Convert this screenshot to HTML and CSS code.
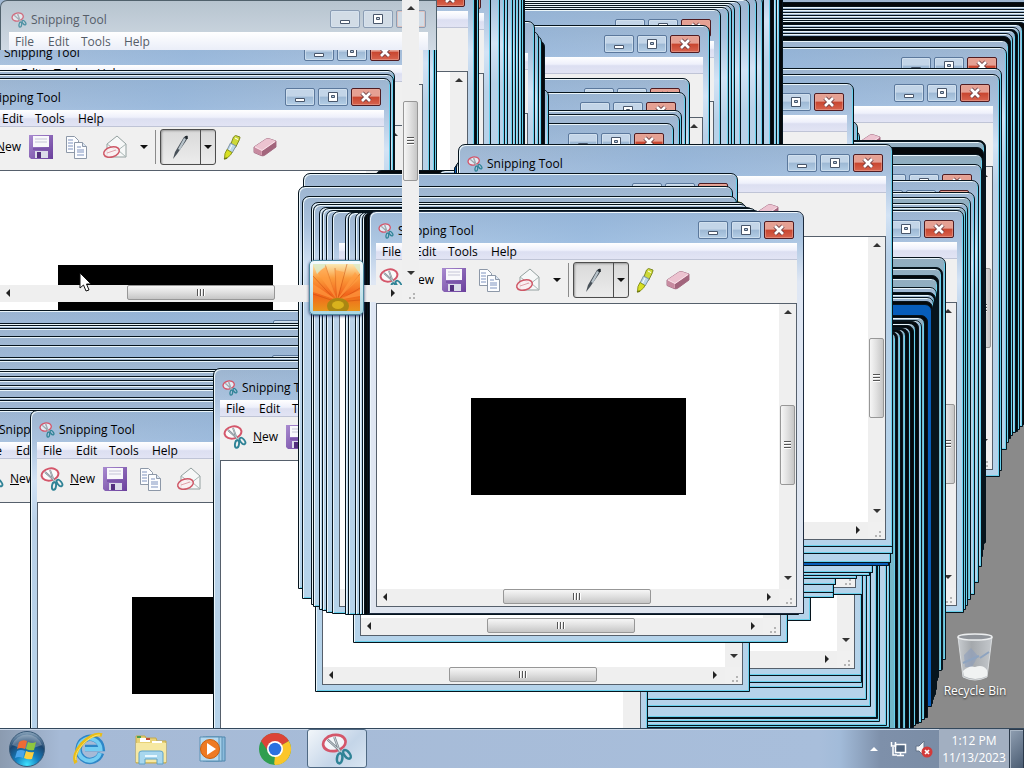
FILE: index.html
```html
<!DOCTYPE html>
<html lang="en">
<head>
<meta charset="utf-8">
<title>Desktop</title>
<link rel="stylesheet" href="styles.css">
</head>
<body>
<svg class="sprite" aria-hidden="true">
  <defs>
    <linearGradient id="g-pink" x1="0" y1="0" x2="1" y2="1"><stop offset="0" stop-color="#f3cfda"/><stop offset="1" stop-color="#b76f88"/></linearGradient>
    <linearGradient id="g-purple" x1="0" y1="0" x2="1" y2="1"><stop offset="0" stop-color="#a98bd0"/><stop offset="1" stop-color="#6a3f9c"/></linearGradient>
    <radialGradient id="g-orb" cx="50%" cy="95%" r="95%"><stop offset="0" stop-color="#3fe3ff"/><stop offset=".35" stop-color="#1580c0"/><stop offset=".7" stop-color="#1c456f"/><stop offset="1" stop-color="#8fa9bf"/></radialGradient>
    <linearGradient id="g-sky" x1="0" y1="0" x2="0" y2="1"><stop offset="0" stop-color="#fbe9b4"/><stop offset=".3" stop-color="#fb9c3c"/><stop offset=".65" stop-color="#f2641b"/><stop offset="1" stop-color="#e8961c"/></linearGradient>
    <linearGradient id="g-bin" x1="0" y1="0" x2="1" y2="0"><stop offset="0" stop-color="#c8ccd0"/><stop offset=".4" stop-color="#a4a8ac"/><stop offset="1" stop-color="#c4c8cc"/></linearGradient>
  </defs>
  <symbol id="snip" viewBox="0 0 24 24">
    <ellipse cx="10" cy="7.500" rx="8.500" ry="6" fill="#fff" fill-opacity=".7" stroke="#d4566a" stroke-width="2" transform="rotate(-12 10 7.500)"/>
    <path d="M5 5l10 9M10 3l4 11" stroke="#7b8790" stroke-width="1.800" fill="none"/>
    <path d="M5 5l10 9M10 3l4 11" stroke="#dfe5e8" stroke-width=".6" fill="none"/>
    <ellipse cx="14" cy="19" rx="2" ry="3.800" fill="none" stroke="#2f8396" stroke-width="1.900" transform="rotate(8 14 19)"/>
    <ellipse cx="19.500" cy="16" rx="2" ry="3.800" fill="none" stroke="#2f8396" stroke-width="1.900" transform="rotate(-38 19.500 16)"/>
  </symbol>
  <symbol id="save" viewBox="0 0 24 24">
    <path d="M0 0h24v24H2l-2-2z" fill="url(#g-purple)"/><path d="M4 1h16v11H4z" fill="#f8f8fb"/><path d="M6 4h12M6 7h12" stroke="#c4c4d6"/>
    <path d="M4 13h16v2H4z" fill="#7b55aa"/><path d="M6 16h13v7H6z" fill="#dcdcea"/><path d="M8 17h4v6H8z" fill="#54307f"/>
  </symbol>
  <symbol id="copy" viewBox="0 0 24 24">
    <g fill="#fcfdff" stroke="#8d98a8"><path d="M2.500 1.500h8l4 4v12h-12z"/><path d="M10.500 7.500h8l4 4v12h-12z"/></g>
    <path d="M4 5h5M4 8h5M4 11h5M4 14h5M13 12h4M13 15h7M13 17h7M13 20h7" stroke="#7e93bf"/>
    <path d="M18.500 7.500v4h4" fill="#dbe5f2" stroke="#8d98a8"/>
  </symbol>
  <symbol id="mail" viewBox="0 0 26 26">
    <path d="M5 10L15 2l9 8v13H5z" fill="#f6f8f8" stroke="#93a09f"/><path d="M5 10l10 7 9-7M24 23l-8-7" fill="none" stroke="#a9b6b4"/>
    <ellipse cx="9.500" cy="18" rx="8" ry="5" fill="#fbeef0" fill-opacity=".8" stroke="#cf5867" stroke-width="1.500" transform="rotate(-16 9.500 18)"/>
    <path d="M5 19l9-3" stroke="#e0a0a8"/>
  </symbol>
  <symbol id="pen" viewBox="0 0 20 26">
    <path d="M2 25l2-7L13 3q3-2 4-1 0 2-2 5L6 20z" fill="#49525a"/><path d="M7 15l6-11 2 1-6 11z" fill="#b8c3ca"/><path d="M15 2l1 3" stroke="#20262b" stroke-width="2"/>
  </symbol>
  <symbol id="marker" viewBox="0 0 20 26">
    <path d="M11.500 3l2-1.500 4.500 1.500-.5 2.500-4 8-5-2.500z" fill="#cdd93a" stroke="#7f8a24"/>
    <path d="M8.500 9l5.500 3-4 7-5-3z" fill="#bcd7ea" stroke="#7d93a2"/>
    <path d="M5 15.500l5 3-1.500 2.500-4 3.500H2.500l.5-5z" fill="#d9e022" stroke="#8c961c"/>
    <path d="M13 4l3 1.500M10 11l-2.500 5" stroke="#fff"/><path d="M2 25l3-1" stroke="#6f7a12" stroke-width="1.500"/>
  </symbol>
  <symbol id="eraser" viewBox="0 0 24 22">
    <path d="M1 11L13 3q2-1 4 0l6 2v6L12 19q-2 1.500-4 .5l-7-3z" fill="#d79db0" stroke="#a7748a"/>
    <path d="M1 11L13 3q2-1 4 0l6 2-13 9q-1 .6-2 0z" fill="#ecc3d0"/>
    <path d="M1 11l7 3.500v5L1 16z" fill="#c78ba0"/><path d="M9 15L23 5.500V11L12 19l-3 .7z" fill="#a2657c"/><path d="M2 11l7 3.500L22 5.500" fill="none" stroke="#f9e3ea"/>
  </symbol>
  <symbol id="min" viewBox="0 0 12 12"><path d="M1.500 7.500h9v3h-9z" fill="#fff" stroke="#48566b"/></symbol>
  <symbol id="max" viewBox="0 0 12 12"><path d="M1.500 1.500h9v9h-9zM4.500 4.500h3v2h-3z" fill="#fff" fill-rule="evenodd" stroke="#48566b"/></symbol>
  <symbol id="close" viewBox="0 0 12 12"><path d="M2 2l8 8M10 2l-8 8" stroke="#6b3b40" stroke-width="4.500"/><path d="M2 2l8 8M10 2l-8 8" stroke="#fff" stroke-width="2.700"/></symbol>
</svg>

<div class="screen">
  <main class="desktop" id="desktop">
    <a class="recycle" href="#recycle">
      <svg width="40" height="50" viewBox="0 0 40 50"><path d="M3 4l5 40q12 6 24 0l5-40z" fill="url(#g-bin)" stroke="#d9dcde"/><ellipse cx="20" cy="4" rx="17" ry="3" fill="#90949a" stroke="#eceeef" stroke-width="1.500"/><path d="M9 22l7-7 7 8-6 11H10z" fill="#8a9dbd" opacity=".55"/><path d="M25 25l9-6M8 30l16-7" stroke="#8ea4c0" stroke-width="2"/><path d="M8 38q6-6 12-4 8-3 12 3v6q-12 6-23 0z" fill="#f0f2f2"/></svg>
      <span>Recycle Bin</span>
    </a>
  </main>

  <footer class="taskbar">
    <button class="start" aria-label="Start"><svg width="38" height="38" viewBox="0 0 38 38"><circle cx="19" cy="19" r="17.500" fill="url(#g-orb)" stroke="#395a78"/><path d="M4 15a16 16 0 0 1 30 0q-15 7-30 0z" fill="#fff" opacity=".25"/><path d="M11 12q4-3 8-1l-2 8q-4-2-8 0z" fill="#ee6b35"/><path d="M20 12q4 2 8 0l-2 8q-4 1-8-1z" fill="#8ec63f"/><path d="M9 21q4-2 8 0l-2 7q-4-2-8 0z" fill="#4aa5ea"/><path d="M18 21q4 2 8 1l-2 7q-4 1-8-1z" fill="#fccf3e"/></svg></button>
    <nav class="apps">
      <button class="app" aria-label="Internet Explorer"><svg width="34" height="34" viewBox="0 0 34 34"><path d="M29 21a11.500 11.500 0 1 1 .5-5H13" fill="none" stroke="#2e87c8" stroke-width="6.500"/><path d="M28 21a11 11 0 1 1 .5-4H13" fill="none" stroke="#74cdf2" stroke-width="4"/><path d="M4 31C-2 21 17-1 30 3" fill="none" stroke="#e9bd18" stroke-width="3.500"/><path d="M4 28C1 20 18 2 28 3" fill="none" stroke="#f9e67a"/></svg></button>
      <button class="app" aria-label="Windows Explorer"><svg width="34" height="32" viewBox="0 0 34 32"><path d="M2 3h9l1 2h10l1 3h9v22H2z" fill="#e8d276" stroke="#c5aa4d"/><path d="M6 5h10v4H6zM18 8h10v4H18z" fill="#fff"/><path d="M3 3h4v2H3z" fill="#4b9e4d"/><path d="M12 5h4v2h-4z" fill="#c34b35"/><path d="M2 10h30v19H2z" fill="#f6e8a2"/><path d="M5 31V20q0-2 3-2h18q3 0 3 2v11h-6v-5H11v5z" fill="#a8d7ee" stroke="#5fa2c8"/><path d="M11 23h12" stroke="#e8f8ff" stroke-width="2"/></svg></button>
      <button class="app" aria-label="Windows Media Player"><svg width="30" height="28" viewBox="0 0 30 28"><path d="M8 2h19v24H8z" fill="#8bbbdc" stroke="#4f86ad"/><path d="M5 2h19v24H5z" fill="#a5cfe8" stroke="#5b90b4"/><path d="M2 2h19v24H2z" fill="#b6daf0" stroke="#5b90b4"/><circle cx="12" cy="14" r="9.500" fill="#ee7a23" stroke="#c9600f"/><path d="M9 8l9 6-9 6z" fill="#fff"/></svg></button>
      <button class="app" aria-label="Google Chrome"><svg width="34" height="34" viewBox="0 0 34 34"><circle cx="17" cy="17" r="16" fill="#2f9e4f"/><path d="M17 17L3.100 9A16 16 0 0 1 30.900 9z" fill="#dc4437"/><path d="M17 17l13.900-8A16 16 0 0 1 17 33z" fill="#fbc629"/><path d="M3.100 9h14l-6.500 11z" fill="#dc4437"/><path d="M23.500 20.500L16 33l1-9z" fill="#fbc629"/><circle cx="17" cy="17" r="8" fill="#fff"/><circle cx="17" cy="17" r="6.300" fill="#2a70e0"/></svg></button>
      <button class="app app-open" aria-label="Snipping Tool"><svg width="32" height="32"><use href="#snip"/></svg></button>
    </nav>
    <div class="tray">
      <button class="tray-icon" aria-label="Show hidden icons"><svg width="10" height="6"><path d="M1 5l4-4 4 4z" fill="#fff"/></svg></button>
      <button class="tray-icon" aria-label="Network"><svg width="18" height="16" viewBox="0 0 18 16"><path d="M5.500 3.500h10v8h-10z" fill="#50647e" stroke="#fff" stroke-width="1.500"/><path d="M7 14.500h7M10.500 12v2M3 6v8h4M1.500 1v4h4V1" fill="none" stroke="#fff" stroke-width="1.500"/></svg></button>
      <button class="tray-icon" aria-label="Volume muted"><svg width="18" height="18" viewBox="0 0 18 18"><path d="M1 6h3l5-5v15l-5-5H1z" fill="#f4f6f8" stroke="#64748a"/><circle cx="12" cy="12" r="5.500" fill="#d23a3a"/><path d="M10 10l4 4M14 10l-4 4" stroke="#fff" stroke-width="1.700"/></svg></button>
    </div>
    <button class="clock"><span>1:12 PM</span><span>11/13/2023</span></button>
    <button class="peek" aria-label="Show desktop"></button>
  </footer>
</div>
<script src="desktop.js"></script>
</body>
</html>
```
FILE: styles.css
```css
* { box-sizing: border-box; }
body { margin: 0; font: 12px/16px "Open Sans", "Noto Sans", sans-serif; color: #000; overflow: hidden; }
button { font: inherit; color: inherit; background: none; border: 0; padding: 0; margin: 0; }
svg { display: block; }
.sprite { position: absolute; width: 0; height: 0; }
.screen { height: 100vh; display: flex; flex-direction: column; background: #8a8a8a; }
.desktop { flex: 1; position: relative; overflow: hidden; }

.recycle { position: absolute; right: 8px; bottom: 29px; width: 82px; display: flex; flex-direction: column; align-items: center; color: #fff; text-decoration: none; text-shadow: 0 1px 2px #222; }

/* Windows */
.window { position: absolute; width: 435px; height: 403px; display: flex; flex-direction: column; padding: 0 6px 6px; border: 1px solid #06141d; border-radius: 7px 7px 0 0; background: linear-gradient(#9db5d0, #a9c1dd 28px, #d3e3f5 70px, #b9d1e8 110px, #b5d3ea); box-shadow: inset 1px 1px #eaf5fa, inset -1px -1px #68d0ec; }
.window.blue { background: #075dba; box-shadow: none; }
.window.dark { background: #05080b; box-shadow: none; }
.window.teal { background: linear-gradient(#93adc0, #7cb9c9 60px, #6fb6c8); }
.window.active { background: linear-gradient(#9eb8d6, #acc6e2 28px, #dfe7f4 70px, #dfe5ef); border-color: #1c2a3d; box-shadow: inset 1px 1px #edf6fc; }
.titlebar { flex: none; height: 30px; display: flex; align-items: flex-start; justify-content: flex-end; margin-top: 1px; padding: 8px 3px 0 2px; background: linear-gradient(90deg, transparent, #86afdc66, transparent); }
.title { flex: 1; display: flex; align-items: center; gap: 4px; padding-top: 2px; }
.captions { display: flex; gap: 3px; }
.caption { width: 30px; height: 18px; display: grid; place-items: center; border: 1px solid #5b789c; border-radius: 2px; background: linear-gradient(#c3d5e8 45%, #9db8d4 50%, #b4cee6); box-shadow: inset 0 0 0 1px #d8e6f2aa; }
.caption-close { border-color: #501c22; background: linear-gradient(#e5a093 45%, #c8452f 50%, #d8644f); box-shadow: inset 0 0 0 1px #e8aa9c88; }
.client { flex: 1; min-height: 0; display: flex; flex-direction: column; background: #f0f0f0; }
.menu { flex: none; height: 17px; display: flex; padding-left: 6px; background: linear-gradient(#fff, #eef0fb 45%, #dcdff1 55%, #e2e4f4); border-bottom: 1px solid #bfc4d6; }
.menu button { text-align: left; width: 33px; line-height: 15px; }
.menu button:nth-child(3) { width: 43px; }
.toolbar { flex: none; height: 43px; display: flex; align-items: center; padding: 0 0 3px 1px; }
.toolbar button, .toolbar-blank { height: 36px; display: flex; align-items: center; justify-content: center; }
.toolbar .new { width: 62px; justify-content: flex-start; gap: 6px; padding-left: 2px; }
.w-20 { width: 20px; } .w-30 { width: 30px; } .w-32 { width: 32px; } .w-34 { width: 34px; } .w-38 { width: 38px; } .w-40 { width: 40px; }
.separator { width: 1px; height: 34px; margin: 0 4px 0 1px; background: #8b8b8b; }
.split { display: flex; border: 1px solid #4d4d4d; border-radius: 3px; background: linear-gradient(#d9d9d9, #ececec); box-shadow: inset 1px 1px 2px #9a9a9a; }
.split .pen { width: 40px; height: 34px; border-right: 1px solid #4d4d4d; }
.split .more { width: 14px; height: 34px; }
.toolbar-blank { width: 284px; }
.down::before { content: ""; border: 4px solid transparent; border-top-color: #111; border-bottom: 0; }
.canvas { flex: 1; min-height: 0; display: grid; grid-template: 1fr 17px / 1fr 17px; border: 1px solid #56606c; background: #fff; }
.picture { place-self: center; width: 215px; height: 97px; background: #000; }
.scroll-v { display: flex; flex-direction: column; align-items: center; justify-content: space-between; background: #efefef; padding: 6px 1px 9px; }
.scroll-h { display: flex; align-items: center; justify-content: space-between; background: #efefef; padding: 0 8px 2px 6px; }
.arrow { border: 4px solid transparent; }
.up { border-bottom-color: #333; border-top: 0; }
.dn { border-top-color: #333; border-bottom: 0; }
.lf { border-right-color: #222; border-left: 0; }
.rt { border-left-color: #222; border-right: 0; }
.thumb-v { width: 15px; height: 80px; display: grid; place-items: center; border: 1px solid #979797; border-radius: 2px; background: linear-gradient(90deg, #f6f6f6, #e2e2e2 45%, #c6c6c6); }
.thumb-h { width: 148px; height: 15px; display: grid; place-items: center; border: 1px solid #979797; border-radius: 2px; background: linear-gradient(#f6f6f6, #e2e2e2 45%, #c6c6c6); }
.thumb-v::before { content: ""; width: 7px; height: 8px; background: repeating-linear-gradient(#555 0 1px, #fff 1px 2px, transparent 2px 3px); }
.thumb-h::before { content: ""; width: 8px; height: 7px; background: repeating-linear-gradient(90deg, #555 0 1px, #fff 1px 2px, transparent 2px 3px); }
.corner { display: grid; place-items: end; padding: 2px; background: #f0f0f0; }
.corner::before { content: ""; width: 10px; height: 10px; background: repeating-conic-gradient(#b4b4b4 0 25%, transparent 0 100%) 0 0 / 4px 4px; clip-path: polygon(100% 0, 100% 100%, 0 100%); }

/* Fading window and loose scroll bars over the stack */
.fading { position: absolute; left: 0; top: 0; width: 437px; height: 50px; overflow: hidden; padding: 0 8px; border: 1px solid #50616c; border-bottom: 0; border-radius: 7px 0 0 0; background: linear-gradient(#b7c4cf, #d0dae4); color: #555d68; }
.fading .titlebar { background: none; padding-right: 2px; }
.fading .menu { height: 20px; background: linear-gradient(#fff, #e9edf8); }
.fading .menu button { line-height: 17px; }
.fading .title svg { opacity: .8; }
.fading .caption { background: #d2dce6; border-color: #8b9db4; }
.fading .caption-close svg { visibility: hidden; }
.loose-v { position: absolute; left: 402px; top: 0; width: 17px; height: 284px; }
.loose-h { position: absolute; left: 0; top: 285px; width: 403px; height: 17px; }
.loose-c { position: absolute; left: 402px; top: 284px; width: 17px; height: 17px; }
.user { position: absolute; left: 309px; top: 260px; padding: 3px; border: 1px solid #4e8aa0; border-radius: 5px; background: linear-gradient(#f5fbfc, #a9d6e2); box-shadow: 0 1px 3px #236; }
.cursor { position: absolute; left: 79px; top: 272px; }

/* Taskbar */
.taskbar { flex: none; height: 40px; display: flex; align-items: stretch; border-top: 1px solid #33485c; background: linear-gradient(90deg, #8b9bb0, #a6bad6 60px, #a8bedb 80%, #a2bbd9 82%, #7e90aa 86%, #76889f); box-shadow: inset 0 1px #cddaea; }
.start { width: 58px; padding-left: 8px; }
.apps { flex: 1; display: flex; }
.app { width: 62px; display: grid; place-items: center; }
.app-open { width: 60px; margin-left: 1px; border: 1px solid #4f6983; border-radius: 3px; background: linear-gradient(135deg, #f2f6fa, #c4d5e8 60%, #d9e6f2); }
.tray { display: flex; align-items: center; padding-right: 3px; }
.tray-icon { width: 25px; display: grid; place-items: center; }
.clock { width: 70px; display: flex; flex-direction: column; align-items: center; justify-content: center; color: #fff; background: #a2afc1; line-height: 17px; }
.peek { width: 15px; border: 1px solid #2c3a4b; border-bottom: 0; background: linear-gradient(135deg, #909fb2, #4a5c72); box-shadow: inset 1px 1px #a9b6c5; }
```
FILE: desktop.js
```js
const W = 435, H = 403;
const icon = (name, w, h = w) => `<svg width="${w}" height="${h}"><use href="#${name}"/></svg>`;

const captions = `<div class="captions">
  <button class="caption" aria-label="Minimize">${icon('min', 12)}</button>
  <button class="caption" aria-label="Maximize">${icon('max', 12)}</button>
  <button class="caption caption-close" aria-label="Close">${icon('close', 12)}</button></div>`;
const title = `<div class="title">${icon('snip', 16)}<span>Snipping Tool</span></div>`;
const menu = `<div class="menu"><button>File</button><button>Edit</button><button>Tools</button><button>Help</button></div>`;
const tools = `<div class="toolbar">
  <button class="new">${icon('snip', 24)}<span><u>N</u>ew</span></button>
  <button class="w-30" aria-label="Save">${icon('save', 24)}</button>
  <button class="w-40" aria-label="Copy">${icon('copy', 24)}</button>
  <button class="w-38" aria-label="Send">${icon('mail', 26)}</button>
  <button class="w-20 down" aria-label="Send options"></button>
  <span class="separator"></span>
  <div class="split"><button class="pen" aria-label="Pen">${icon('pen', 20, 26)}</button><button class="more down" aria-label="Pen options"></button></div>
  <button class="w-32" aria-label="Highlighter">${icon('marker', 20, 26)}</button>
  <button class="w-34" aria-label="Eraser">${icon('eraser', 24, 22)}</button></div>`;
const scrollV = c => `<div class="scroll-v ${c}"><i class="arrow up"></i><i class="thumb-v"></i><i class="arrow dn"></i></div>`;
const scrollH = c => `<div class="scroll-h ${c}"><i class="arrow lf"></i><i class="thumb-h"></i><i class="arrow rt"></i></div>`;
const canvas = `<div class="canvas"><div class="picture"></div>${scrollV('')}${scrollH('')}<div class="corner"></div></div>`;
const blank = `<div class="canvas"><div></div>${scrollV('')}${scrollH('')}<div class="corner"></div></div>`;

const full = `<div class="titlebar">${title}${captions}</div><div class="client">${menu}${tools}${canvas}</div>`;
const plain = `<div class="titlebar">${captions}</div><div class="client"><div class="menu"></div>
  <div class="toolbar"><div class="toolbar-blank"></div>${icon('eraser', 24, 22)}</div>${blank}</div>`;

const out = [];
const add = (right, top, kind = '', body = '') =>
  out.push(`<section class="window ${kind}" style="left:${right - W}px;top:${top}px">${body}</section>`);
const edges = list => list.forEach(([r, t, k]) => add(r, t, k));

// Far right
edges([[1060,-2],[1056,2,'dark'],[1052,6],[1048,9],[1044,12],[1040,15],[1036,18],[1032,20],[1027,22,'dark'],[1023,24],[1020,27],[1018,29,'dark'],[1016,30],[1013,33],[1011,36,'dark'],[1009,40]]);
add(1007, 47, '', plain);
add(1002, 68);
add(1000, 74, '', plain);
edges([[862,138],[860,130],[858,121],[986,140,'dark'],[985,141,'teal'],[984,147,'dark'],[983,154,'teal']]);
add(982, 164, '', plain);
add(979, 180, '', plain);
edges([[975,192],[971,197,'teal'],[968,203],[966,207,'teal']]);
add(964, 210, '', plain);
edges([[946,257,'teal'],[943,267,'dark'],[942,268,'teal'],[939,275,'dark'],[938,278,'teal'],[937,287],[936,292,'dark'],[935,294],[934,297],[933,301,'dark'],[932,304,'blue'],[928,315,'dark'],[925,317,'teal'],[922,320],[919,321,'dark'],[916,323,'teal'],[914,325,'dark'],[911,327],[909,328,'dark'],[906,329,'teal'],[903,329,'dark'],[901,331,'teal'],[898,331,'dark'],[896,332,'teal']]);
add(854, 83, '', plain);

// Top centre
edges([[783,-70,'dark'],[780,-65],[777,-60],[774,-55,'dark'],[771,-50],[764,-20],[763,-4],[757,-3],[750,-1],[741,1],[735,3],[732,5],[729,7]]);
add(721, 9, '', plain);
add(710, 25, '', plain);
add(690, 78, '', plain);
add(686, 92, '', plain);
edges([[682,110],[680,114]]);
add(674, 123, '', plain);
edges([[549,89],[545,40,'dark'],[542,35],[539,31]]);
add(535, 21, '', plain);
edges([[525,-10,'dark'],[524,-12],[522,-14],[519,-16],[516,-18],[513,-20],[508,-24],[505,-26],[500,-28]]);
add(491, -19, '', plain);
edges([[479,-30],[477,-30,'dark']]);
add(475, -21, '', plain);
edges([[437,0],[435,1]]);
add(430, -8, '', plain);
add(410, 33, '', full);
edges([[395,70],[394,74]]);
add(391, 78, '', full);

// Left pile
add(379, 310, '', plain);
edges([[376,323],[376,325],[375,328],[374,336]]);
add(378, 345, '', plain);
edges([[376,357],[376,360],[375,369],[375,371],[374,376],[374,380],[373,385],[373,389],[372,397],[372,400],[371,408]]);
add(405, 410, '', full);
add(465, 410, '', full);

// Lower right
edges([[890,325],[887,323],[880,319],[878,316,'dark'],[877,315],[871,304],[867,297],[863,285],[862,280]]);
add(862, 273, '', plain);
add(863, 192, '', plain);
add(811, 218);
edges([[834,195],[834,190,'dark'],[834,188],[836,182],[857,176],[870,173],[873,170],[889,163,'blue'],[891,160],[893,151]]);
add(648, 368, '', full);
add(810, 170, 'dark');
edges([[811,218],[834,195],[834,190],[836,182],[857,176],[870,173],[873,170],[889,163,'blue'],[891,160],[893,151]]);
add(893, 144, '', full);

// Centre
add(750, 289, '', plain);
add(788, 240, '', plain);
add(738, 173, '', plain);
edges([[733,186],[737,196],[746,202],[748,204],[754,207],[757,208],[761,210]]);
add(767, 211, '', plain);
edges([[780,212],[783,212],[790,212],[794,212],[797,212],[799,212,'dark'],[802,211,'dark']]);
add(804, 211, 'active', full);

out.push(`<section class="fading"><div class="titlebar">${title}${captions}</div>${menu}</section>`);
out.push(scrollV('loose-v') + scrollH('loose-h') + '<div class="corner loose-c"></div>');
out.push(`<div class="user"><svg width="47" height="47" viewBox="0 0 47 47"><path d="M0 0h47v47H0z" fill="url(#g-sky)"/>
  <g stroke="#c84b10" stroke-width="1" fill="none" opacity=".5"><path d="M24 38L0 12M24 38L12 0M24 38L22 4M24 38L34 0M24 38L47 10M24 38L47 24M24 38L0 30M24 38L47 36"/></g>
  <g fill="#ff9d42" opacity=".65"><path d="M24 36L4 8l9-5zM24 36L22 6l9 2zM24 36L42 8l5 6zM24 36L47 26v6zM24 36L0 20v8z"/></g>
  <path d="M0 0h14L4 10zM40 0h7v10z" fill="#d8ecd0" opacity=".8"/><ellipse cx="25" cy="42" rx="11" ry="8" fill="#a98612"/><ellipse cx="25" cy="41" rx="6" ry="4" fill="#d8b21d"/></svg></div>`);
out.push(`<svg class="cursor" width="13" height="20" viewBox="0 0 13 20"><path d="M1 1v15l3.500-3 2.500 6 3-1-2.500-6H12z" fill="#fff" stroke="#111"/></svg>`);

document.getElementById('desktop').insertAdjacentHTML('beforeend', out.join(''));
```
